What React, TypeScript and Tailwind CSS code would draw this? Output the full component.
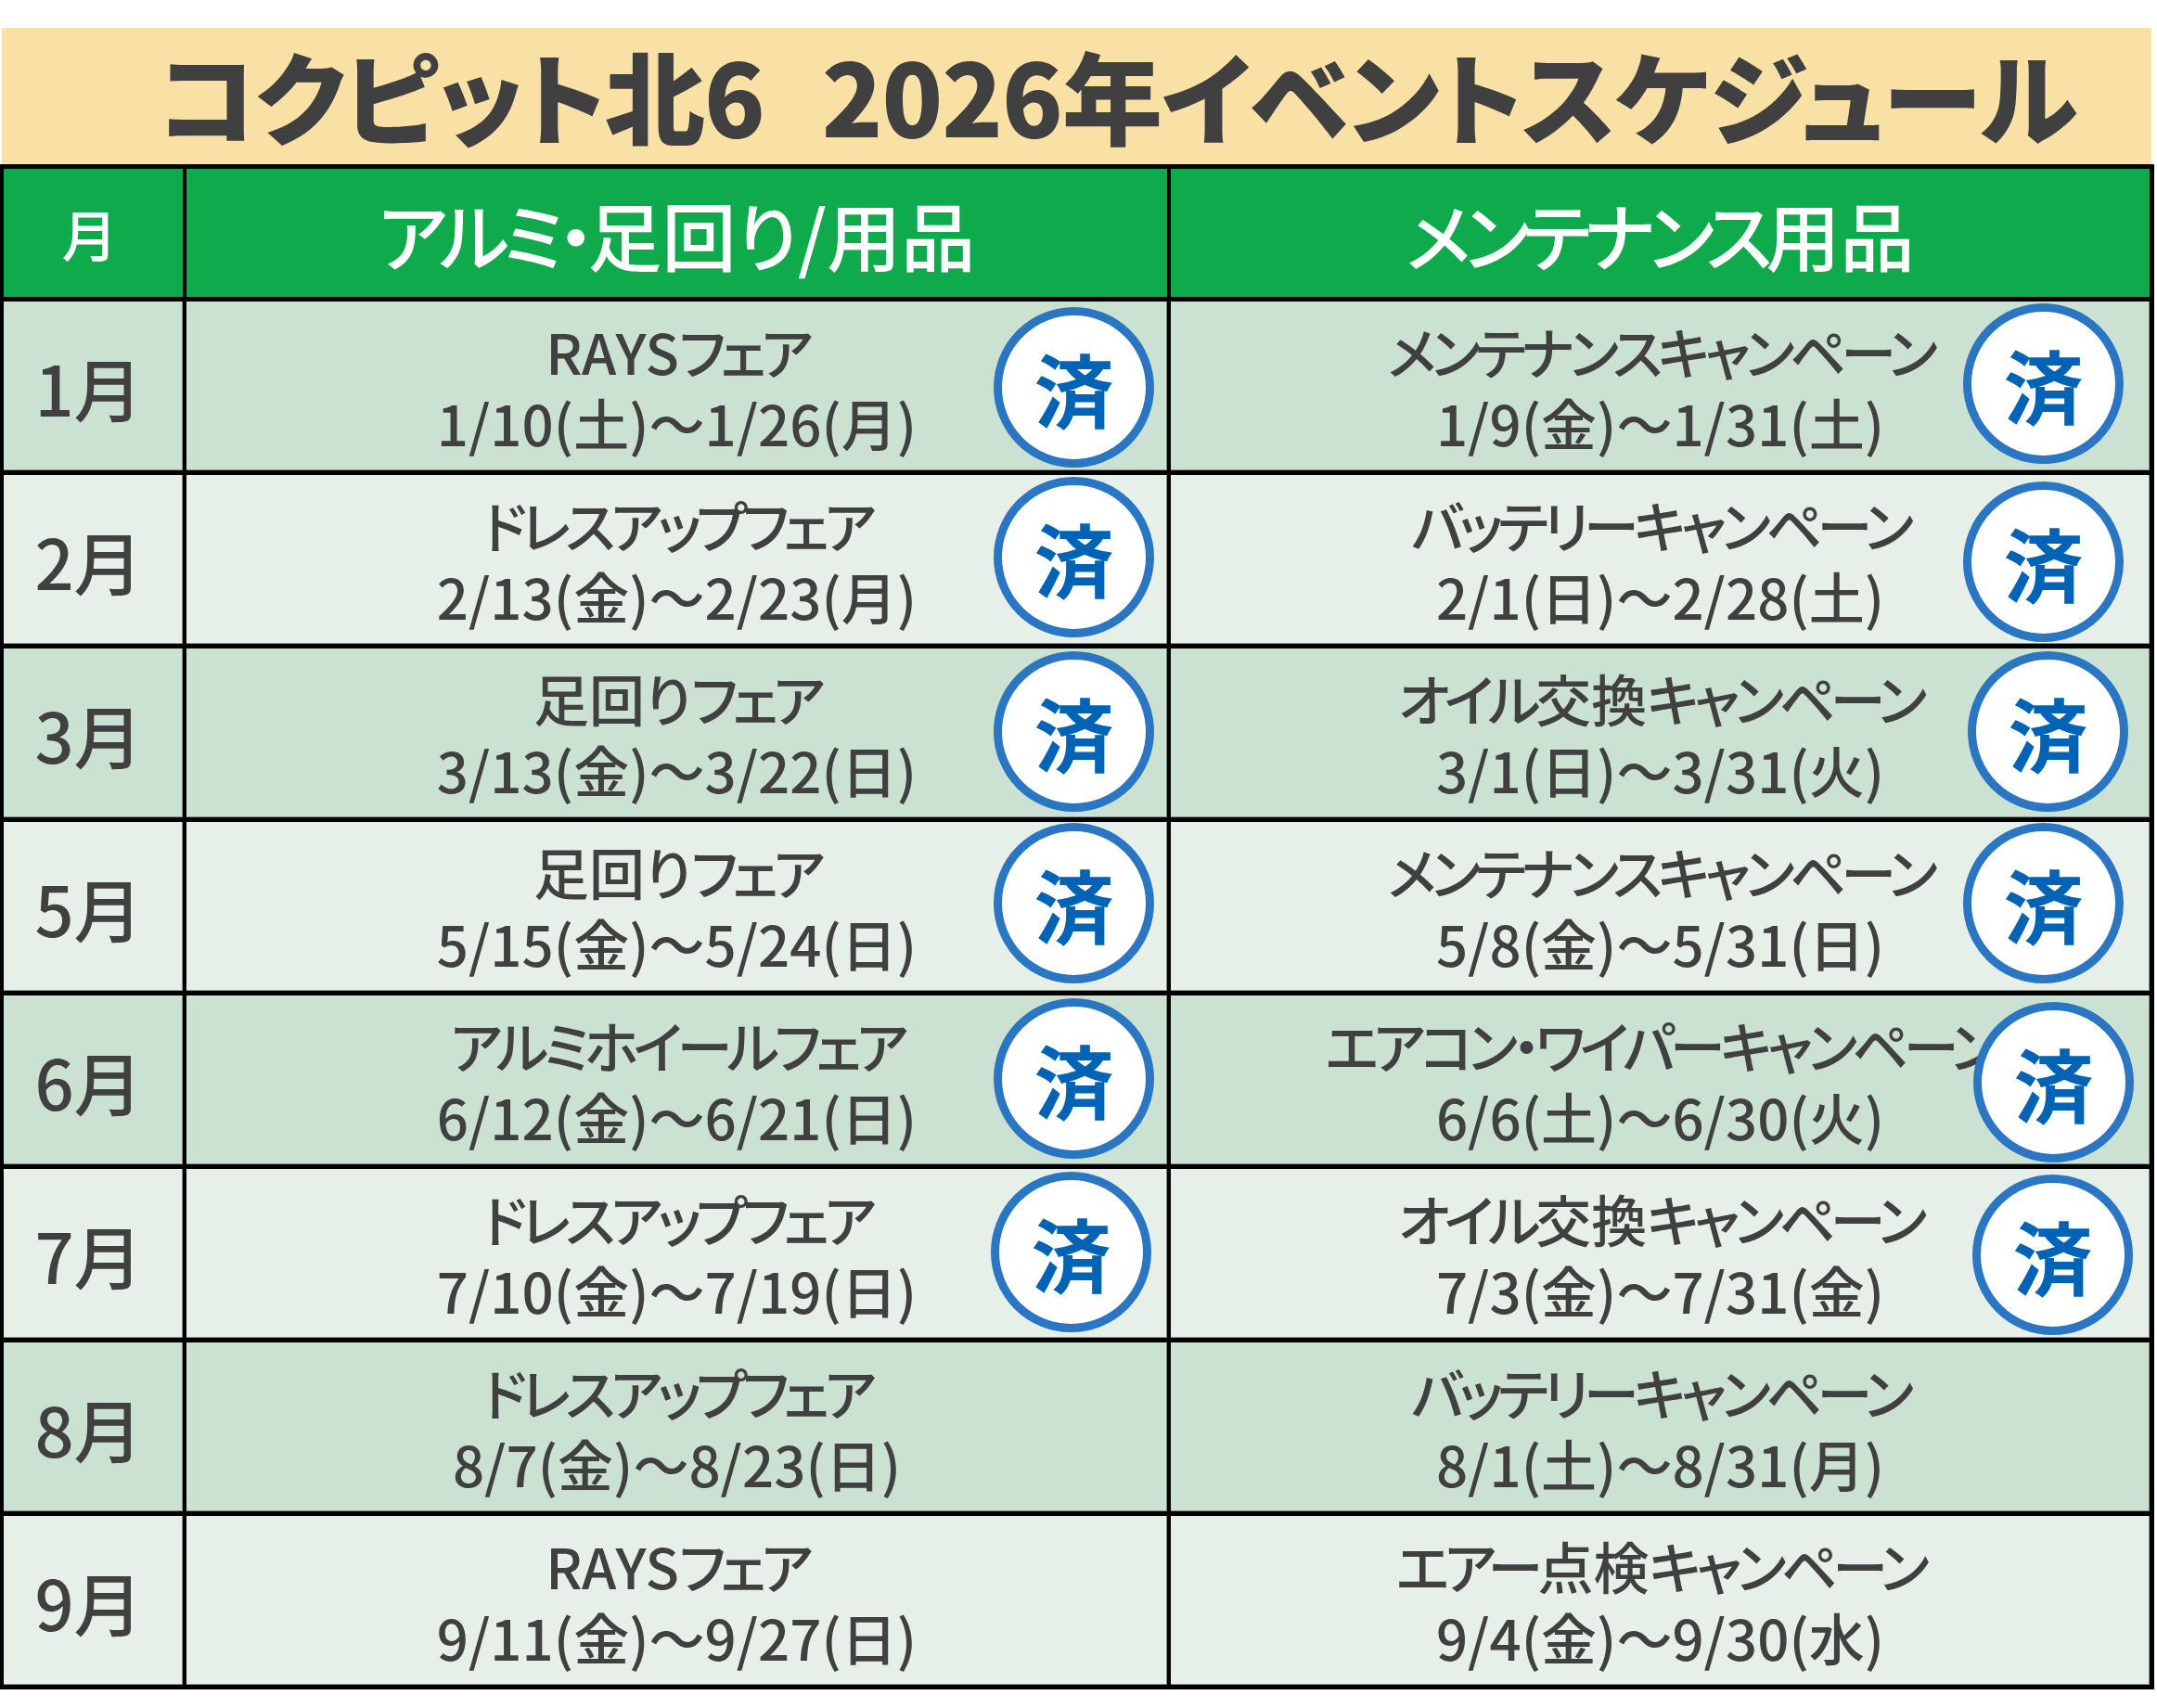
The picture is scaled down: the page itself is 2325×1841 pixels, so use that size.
import React from "react";

type Row = {
  month: string;
  alumi: [string, string];
  maint: [string, string];
  stampA?: string;
  stampB?: string;
};

const rows: Row[] = [
  {
    month: "1月",
    alumi: ["RAYSフェア", "1/10(土)～1/26(月)"],
    maint: ["メンテナンスキャンペーン", "1/9(金)～1/31(土)"],
    stampA: "right-[14px] top-[6px]",
    stampB: "right-[28px] top-[2px]",
  },
  {
    month: "2月",
    alumi: ["ドレスアップフェア", "2/13(金)～2/23(月)"],
    maint: ["バッテリーキャンペーン", "2/1(日)～2/28(土)"],
    stampA: "right-[14px] top-[2px]",
    stampB: "right-[28px] top-[7px]",
  },
  {
    month: "3月",
    alumi: ["足回りフェア", "3/13(金)～3/22(日)"],
    maint: ["オイル交換キャンペーン", "3/1(日)～3/31(火)"],
    stampA: "right-[14px] top-[3px]",
    stampB: "right-[23px] top-[3px]",
  },
  {
    month: "5月",
    alumi: ["足回りフェア", "5/15(金)～5/24(日)"],
    maint: ["メンテナンスキャンペーン", "5/8(金)～5/31(日)"],
    stampA: "right-[14px] top-[1px]",
    stampB: "right-[28px] top-[1px]",
  },
  {
    month: "6月",
    alumi: ["アルミホイールフェア", "6/12(金)～6/21(日)"],
    maint: ["エアコン・ワイパーキャンペーン", "6/6(土)～6/30(火)"],
    stampA: "right-[14px] top-[3px]",
    stampB: "right-[17px] top-[7px]",
  },
  {
    month: "7月",
    alumi: ["ドレスアップフェア", "7/10(金)～7/19(日)"],
    maint: ["オイル交換キャンペーン", "7/3(金)～7/31(金)"],
    stampA: "right-[17px] top-[3px]",
    stampB: "right-[18px] top-[6px]",
  },
  {
    month: "8月",
    alumi: ["ドレスアップフェア", "8/7(金)～8/23(日)"],
    maint: ["バッテリーキャンペーン", "8/1(土)～8/31(月)"],
  },
  {
    month: "9月",
    alumi: ["RAYSフェア", "9/11(金)～9/27(日)"],
    maint: ["エアー点検キャンペーン", "9/4(金)～9/30(水)"],
  },
];

// katakana in the original are set tighter than kanji / digits
const Tight: React.FC<{ text: string }> = ({ text }) => (
  <>
    {text.split(/([\u30A0-\u30FF]+)/).map((part, i) =>
      /[\u30A0-\u30FF]/.test(part) ? (
        <span key={i} className="tracking-[-0.09em]">
          {part}
        </span>
      ) : (
        <React.Fragment key={i}>{part}</React.Fragment>
      )
    )}
  </>
);

const Stamp: React.FC<{ pos: string }> = ({ pos }) => (
  <div
    className={`absolute ${pos} flex h-[173px] w-[173px] items-center justify-center rounded-full border-[9px] border-[#2B76C2] bg-white`}
  >
    <span className="text-[86px] font-bold leading-none text-[#0063B5]">済</span>
  </div>
);

const EventCell: React.FC<{ lines: [string, string]; bg: string; stamp?: string }> = ({
  lines,
  bg,
  stamp,
}) => (
  <div
    className={`relative flex flex-col items-center justify-center ${bg} text-[60px] font-medium leading-[77px] text-[#404040] shadow-[inset_-1px_-1px_0_#8c8c8c]`}
  >
    <span className="whitespace-nowrap">
      <Tight text={lines[0]} />
    </span>
    <span className="whitespace-nowrap">{lines[1]}</span>
    {stamp && <Stamp pos={stamp} />}
  </div>
);

export default function App() {
  return (
    <div className="h-[1841px] w-[2325px] bg-white pt-[30px] font-['Noto_Sans_CJK_JP',sans-serif] [font-feature-settings:'palt']">
      <div className="mx-[2px] flex h-[147px] w-[2317px] items-center justify-center bg-[#F9E0A4] pb-[6px] pl-[88px]">
        <h1 className="whitespace-nowrap text-[108px] font-black leading-none tracking-[-1px] text-[#404040]">
          <span className="mr-[62px]">コクピット北6</span>
          <span>2026年イベントスケジュール</span>
        </h1>
      </div>

      <div className="grid w-[2322px] grid-cols-[193px_1057px_1fr] grid-rows-[138px_repeat(8,182px)] gap-x-[4px] gap-y-[5px] bg-black pb-[5px] pl-[4px] pr-[5px] pt-[5px]">
        <div className="flex items-center justify-center bg-[#0EAA4B] pr-[8px] text-[60px] font-medium text-white">
          月
        </div>
        <div className="flex items-center justify-center bg-[#0EAA4B] text-[80px] font-medium text-white">
          <Tight text="アルミ・足回り/用品" />
        </div>
        <div className="flex items-center justify-center bg-[#0EAA4B] text-[80px] font-medium text-white">
          <Tight text="メンテナンス用品" />
        </div>

        {rows.map((row, i) => {
          const bg = i % 2 === 0 ? "bg-[#CBE1D1]" : "bg-[#E6F0E8]";
          return (
            <React.Fragment key={row.month}>
              <div
                className={`flex items-center justify-center ${bg} pr-[10px] text-[74px] font-medium text-[#404040] shadow-[inset_-1px_-1px_0_#8c8c8c]`}
              >
                {row.month}
              </div>
              <EventCell lines={row.alumi} bg={bg} stamp={row.stampA} />
              <EventCell lines={row.maint} bg={bg} stamp={row.stampB} />
            </React.Fragment>
          );
        })}
      </div>
    </div>
  );
}
